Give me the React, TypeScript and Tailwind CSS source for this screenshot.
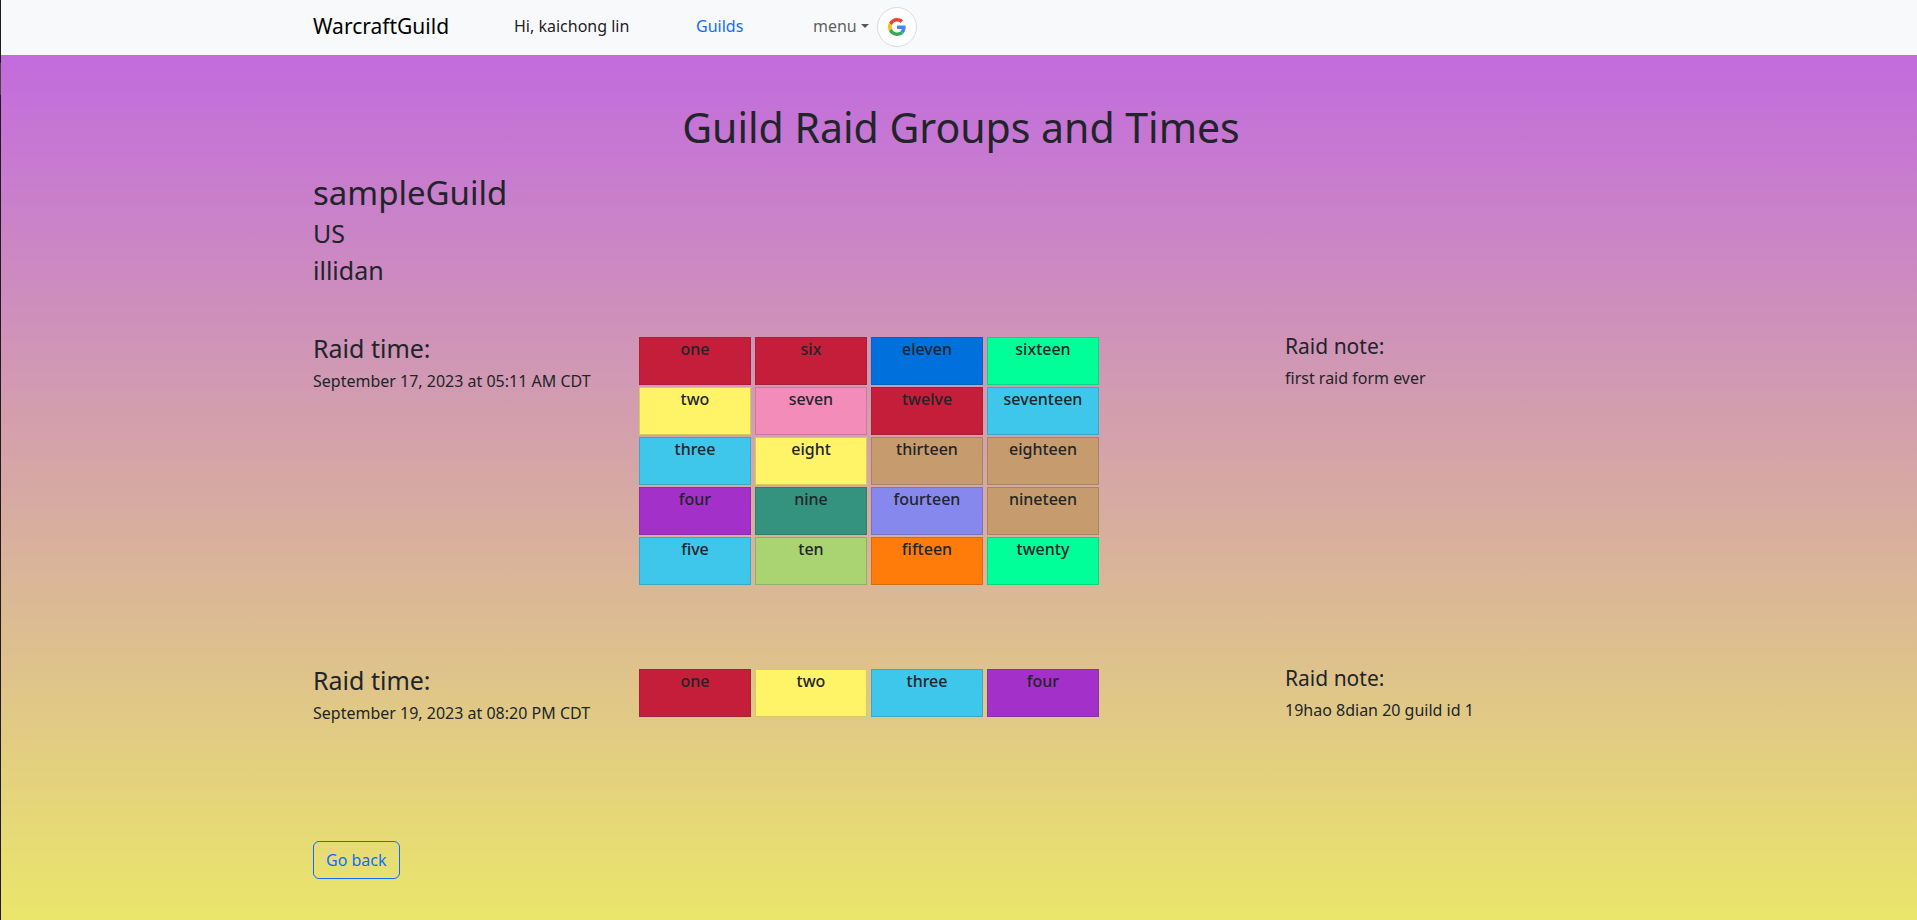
import React from "react";

type Slot = { name: string; color: string };
type Raid = { time: string; note: string; flow: string; slots: Slot[] };

const classColor = {
  deathKnight: "bg-[#c41e3a]",
  demonHunter: "bg-[#a330c9]",
  druid: "bg-[#ff7c0a]",
  evoker: "bg-[#33937f]",
  hunter: "bg-[#aad372]",
  mage: "bg-[#3fc7eb]",
  monk: "bg-[#00ff98]",
  paladin: "bg-[#f48cba]",
  rogue: "bg-[#fff468]",
  shaman: "bg-[#0070dd]",
  warlock: "bg-[#8788ee]",
  warrior: "bg-[#c69b6d]",
};

const raids: Raid[] = [
  {
    time: "September 17, 2023 at 05:11 AM CDT",
    note: "first raid form ever",
    flow: "grid-flow-col grid-rows-5",
    slots: [
      { name: "one", color: classColor.deathKnight },
      { name: "two", color: classColor.rogue },
      { name: "three", color: classColor.mage },
      { name: "four", color: classColor.demonHunter },
      { name: "five", color: classColor.mage },
      { name: "six", color: classColor.deathKnight },
      { name: "seven", color: classColor.paladin },
      { name: "eight", color: classColor.rogue },
      { name: "nine", color: classColor.evoker },
      { name: "ten", color: classColor.hunter },
      { name: "eleven", color: classColor.shaman },
      { name: "twelve", color: classColor.deathKnight },
      { name: "thirteen", color: classColor.warrior },
      { name: "fourteen", color: classColor.warlock },
      { name: "fifteen", color: classColor.druid },
      { name: "sixteen", color: classColor.monk },
      { name: "seventeen", color: classColor.mage },
      { name: "eighteen", color: classColor.warrior },
      { name: "nineteen", color: classColor.warrior },
      { name: "twenty", color: classColor.monk },
    ],
  },
  {
    time: "September 19, 2023 at 08:20 PM CDT",
    note: "19hao 8dian 20 guild id 1",
    flow: "grid-cols-4",
    slots: [
      { name: "one", color: classColor.deathKnight },
      { name: "two", color: classColor.rogue },
      { name: "three", color: classColor.mage },
      { name: "four", color: classColor.demonHunter },
    ],
  },
];

function GoogleIcon() {
  return (
    <svg viewBox="0 0 48 48" className="size-[18px]" aria-hidden="true">
      <path fill="#EA4335" d="M24 9.5c3.54 0 6.71 1.22 9.21 3.6l6.85-6.85C35.9 2.38 30.47 0 24 0 14.62 0 6.51 5.38 2.56 13.22l7.98 6.19C12.43 13.72 17.74 9.5 24 9.5z" />
      <path fill="#4285F4" d="M46.98 24.55c0-1.57-.15-3.09-.38-4.55H24v9.02h12.94c-.58 2.96-2.26 5.48-4.78 7.18l7.73 6c4.51-4.18 7.09-10.36 7.09-17.65z" />
      <path fill="#FBBC05" d="M10.53 28.59c-.48-1.45-.76-2.99-.76-4.59s.27-3.14.76-4.59l-7.98-6.19C.92 16.46 0 20.12 0 24c0 3.88.92 7.54 2.56 10.78l7.97-6.19z" />
      <path fill="#34A853" d="M24 48c6.48 0 11.93-2.13 15.89-5.81l-7.73-6c-2.15 1.45-4.92 2.3-8.16 2.3-6.26 0-11.57-4.22-13.47-9.91l-7.98 6.19C6.51 42.62 14.62 48 24 48z" />
    </svg>
  );
}

function Navbar() {
  return (
    <nav className="bg-[#f8f9fa] pl-1">
      <div className="mx-auto flex h-[55px] max-w-[1320px] items-center px-3 pb-1">
        <a href="#" className="w-[201px] text-[21px] leading-[30px] text-black">
          WarcraftGuild
        </a>
        <span className="w-[182px] text-black/90">Hi, kaichong lin</span>
        <a href="#guilds" className="w-[117px] text-[#0d6efd]">
          Guilds
        </a>
        <button type="button" className="flex items-center gap-1 text-black/65">
          menu
          <svg viewBox="0 0 8 4" className="h-1 w-2" aria-hidden="true">
            <path d="M0 0h8L4 4z" fill="currentColor" />
          </svg>
        </button>
        <button
          type="button"
          aria-label="Sign in with Google"
          className="mt-0.5 ml-2 flex size-10 items-center justify-center rounded-full border border-[#dadce0] bg-white"
        >
          <GoogleIcon />
        </button>
      </div>
    </nav>
  );
}

function RaidRow({ raid }: { raid: Raid }) {
  return (
    <section className="grid grid-cols-4">
      <div>
        <h4 className="mb-2 text-[25px] leading-[26px]">Raid time:</h4>
        <p className="whitespace-nowrap">{raid.time}</p>
      </div>
      <ul className={`col-span-2 m-0.5 grid w-max content-start gap-x-1 gap-y-0.5 ${raid.flow}`}>
        {raid.slots.map((slot) => (
          <li
            key={slot.name}
            className={`h-12 w-28 border border-[#282c34]/20 text-center leading-[22px] font-medium ${slot.color}`}
          >
            {slot.name}
          </li>
        ))}
      </ul>
      <div>
        <h5 className="mb-2 text-[21px] leading-[23px]">Raid note:</h5>
        <p>{raid.note}</p>
      </div>
    </section>
  );
}

export default function App() {
  return (
    <div className="flex min-h-screen font-['Noto_Sans','Open_Sans',sans-serif] text-base leading-6 text-[#212529]">
      <div className="flex w-px shrink-0 flex-col bg-[#1c1c1c] pt-[63px]">
        <div className="h-8 bg-[#454545]" />
      </div>
      <div className="flex min-w-0 flex-1 flex-col">
        <Navbar />
        <main className="flex-1 bg-[linear-gradient(to_bottom,#c26bde,#eae66a)] pt-12 pb-10 pl-1">
          <div className="mx-auto max-w-[1320px] px-3">
            <h1 className="mb-6 text-center text-[41px] leading-12">Guild Raid Groups and Times</h1>
            <h2 className="mb-2 text-[33px] leading-9">sampleGuild</h2>
            <h4 className="mb-2 text-[25px] leading-[29px]">US</h4>
            <h4 className="mb-2 text-[25px] leading-[29px]">illidan</h4>
            <div className="flex flex-col gap-20 pt-[42px]">
              {raids.map((raid) => (
                <RaidRow key={raid.time} raid={raid} />
              ))}
            </div>
            <button
              type="button"
              className="mt-29 block rounded-md border border-[#0d6efd] px-3 py-1.5 text-[#0d6efd]"
            >
              Go back
            </button>
          </div>
        </main>
      </div>
    </div>
  );
}
